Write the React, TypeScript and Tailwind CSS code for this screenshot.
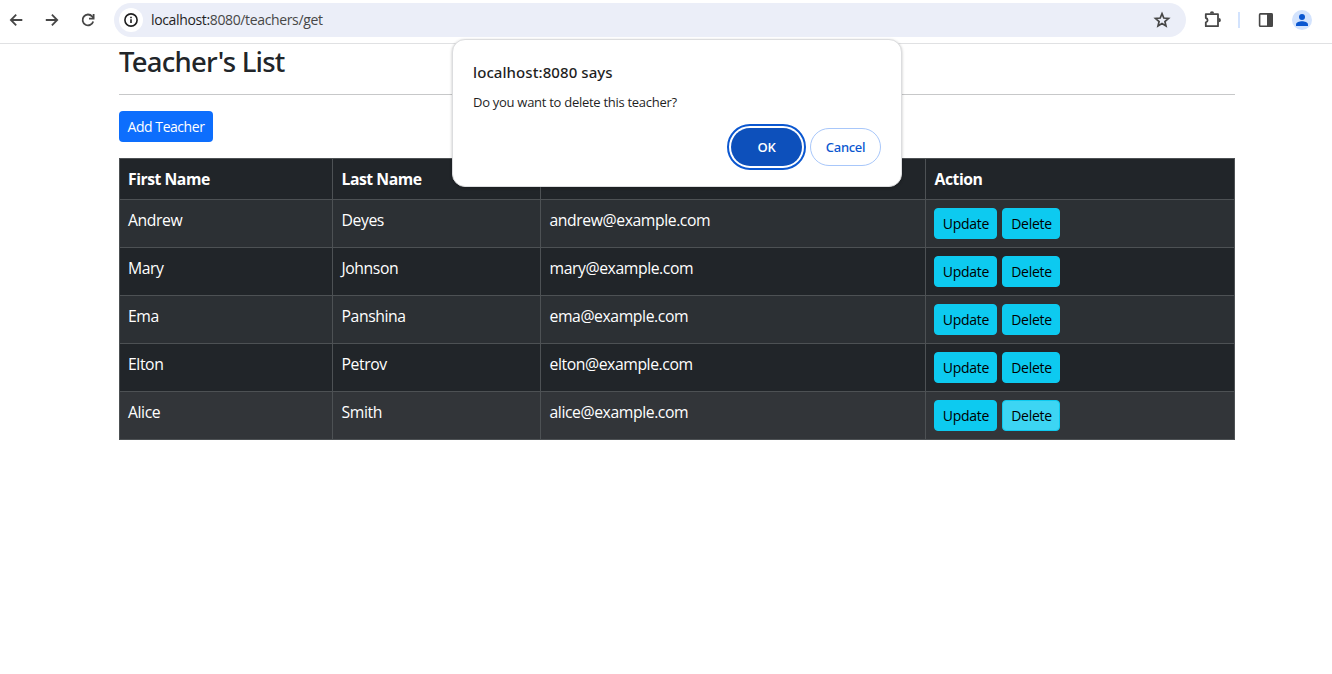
import React from "react";

type Teacher = { first: string; last: string; email: string; row: string };

const teachers: Teacher[] = [
  { first: "Andrew", last: "Deyes", email: "andrew@example.com", row: "bg-[#2c3034]" },
  { first: "Mary", last: "Johnson", email: "mary@example.com", row: "bg-[#212529]" },
  { first: "Ema", last: "Panshina", email: "ema@example.com", row: "bg-[#2c3034]" },
  { first: "Elton", last: "Petrov", email: "elton@example.com", row: "bg-[#212529]" },
  { first: "Alice", last: "Smith", email: "alice@example.com", row: "bg-[#323539]" },
];

const CELL = "border-r border-b border-[#4d5154] pt-2 text-left align-top";
const INFO_BTN =
  "flex h-[31px] items-center justify-center rounded-[4px] border border-[#0dcaf0] pt-px pl-px text-[14px] leading-5 tracking-[-0.28px] text-black";

function Toolbar() {
  return (
    <header className="flex h-11 items-start border-b border-[#e0e1e3] bg-white text-[#474747]">
      <div className="flex h-10 w-[114px] shrink-0 items-center">
        <svg className="ml-2 h-4 w-4" viewBox="0 0 16 16" fill="none" stroke="currentColor" strokeWidth="1.8">
          <path d="M14.3 8H3M8.2 2.7 2.9 8l5.3 5.3" />
        </svg>
        <svg className="ml-5 h-4 w-4" viewBox="0 0 16 16" fill="none" stroke="currentColor" strokeWidth="1.8">
          <path d="M1.8 8h11.3M7.9 2.7 13.2 8l-5.3 5.3" />
        </svg>
        <svg className="ml-5 h-4 w-4" viewBox="0 0 16 16" fill="none" stroke="currentColor" strokeWidth="1.8">
          <path d="M13.2 9.4A5.4 5.4 0 1 1 12.1 4.4L13.6 6" />
          <path d="M13.6 2v4.6H9" />
        </svg>
      </div>
      <div className="mt-[3px] flex h-[34px] w-[1072px] items-center rounded-full bg-[#ebeef8] pr-[15px] pl-[5px]">
        <span className="flex h-6 w-6 items-center justify-center rounded-full bg-white text-[#1f1f1f]">
          <svg className="h-4 w-4" viewBox="0 0 16 16" fill="none" stroke="currentColor" strokeWidth="1.6">
            <circle cx="8" cy="8" r="6.1" />
            <path d="M8 7.2v3.9M8 4.7v1.5" />
          </svg>
        </span>
        <span className="ml-2 text-[14px] leading-5 tracking-[-0.36px] text-[#474747]">
          <span className="text-[#1f1f1f]">localhost:</span>8080/teachers/get
        </span>
        <svg className="ml-auto h-[18px] w-[18px]" viewBox="0 0 18 18" fill="none" stroke="currentColor" strokeWidth="1.7">
          <path d="m9 2.700 1.800 4.300 4.700.400-3.600 3.100 1.100 4.500L9 12.600l-4 2.400 1.100-4.500-3.600-3.100 4.700-.400z" />
        </svg>
      </div>
      <div className="flex h-10 items-center">
        <svg className="ml-[18px] h-[18px] w-[18px]" viewBox="0 0 18 18">
          <path
            d="M1.800 3.100h12.200v12.100H1.800v-3.900c2.400-.500 2.400-3.800 0-4.300z"
            fill="none"
            stroke="currentColor"
            strokeWidth="1.8"
            strokeLinejoin="round"
          />
          <path d="M5.900 2.400a2.100 2.100 0 0 1 4.200 0zM14.800 7.100a2.100 2.100 0 0 1 0 4.200z" fill="currentColor" />
        </svg>
        <span className="ml-4 h-4 w-0.5 bg-[#d3e3fd]" />
        <svg className="ml-[18px] h-4 w-4" viewBox="0 0 16 16">
          <rect x="1.6" y="1.9" width="12.6" height="12.4" rx="0.8" fill="none" stroke="currentColor" strokeWidth="1.6" />
          <path d="M9 1.5h5.5v13.2H9z" fill="currentColor" />
        </svg>
        <svg className="ml-[18px] h-5 w-5" viewBox="0 0 20 20">
          <circle cx="10" cy="10" r="10" fill="#d3e3fd" />
          <circle cx="10" cy="7" r="3" fill="#0b57d0" />
          <path d="M4 16v-1.5c0-2 3.5-3.200 6-3.200s6 1.200 6 3.200V16z" fill="#0b57d0" />
        </svg>
      </div>
    </header>
  );
}

function ConfirmDialog() {
  return (
    <div
      role="dialog"
      className="absolute top-[39px] left-[452px] flex h-[148px] w-[450px] flex-col rounded-[13px] border border-[#dcdddf] bg-white px-5 shadow-[0_1px_3px_rgba(0,0,0,0.25)]"
    >
      <h2 className="mt-5 font-['Noto_Sans','Open_Sans',sans-serif] text-[15px] leading-6 font-medium tracking-[0.08px] text-[#1f1f1f]">
        <span className="inline-block">localhost:8080 says</span>
      </h2>
      <p className="mt-2 text-[13px] leading-5 tracking-[-0.28px] text-[#1f1f1f]">
        <span className="inline-block">Do you want to delete this teacher?</span>
      </p>
      <div className="mt-4 flex justify-end gap-2 text-[13px] leading-none">
        <button className="flex h-[38px] w-[71px] items-center justify-center rounded-full bg-[#0d50bb] font-semibold tracking-[-0.3px] text-white outline-2 outline-offset-2 outline-[#0b57d0]">
          OK
        </button>
        <button className="flex h-[38px] w-[71px] items-center justify-center rounded-full border border-[#a8c7fa] font-['Noto_Sans','Open_Sans',sans-serif] font-medium tracking-[-0.3px] text-[#0b57d0]">
          Cancel
        </button>
      </div>
    </div>
  );
}

export default function App() {
  return (
    <div className="relative h-[674px] w-[1332px] overflow-hidden bg-white font-['Open_Sans','Noto_Sans',sans-serif] text-[#212529]">
      <Toolbar />
      <main className="ml-[119px] w-[1116px]">
        <h1 className="h-[50px] pt-px font-['Noto_Sans','Open_Sans',sans-serif] text-[27.5px] leading-[34px] font-medium tracking-[-0.78px]">
          <span className="inline-block">Teacher's List</span>
        </h1>
        <hr className="border-t border-[#c7c8c9]" />
        <button className="mt-4 flex h-[31px] w-[94px] items-center justify-center rounded-[4px] bg-[#0d6efd] pt-px text-[14px] leading-5 tracking-[-0.45px] text-white">
          Add Teacher
        </button>
        <table className="mt-4 w-[1116px] table-fixed border-separate border-spacing-0 border-t border-l border-[#4d5154] text-[15.75px] leading-6 text-white">
          <colgroup>
            <col className="w-[213px]" />
            <col className="w-[208px]" />
            <col className="w-[385px]" />
            <col className="w-[309px]" />
          </colgroup>
          <thead>
            <tr className="h-[41px] bg-[#212529] tracking-[-0.47px]">
              <th className={`${CELL} pl-2 font-bold`}>First Name</th>
              <th className={`${CELL} pl-[8.5px] font-bold`}>Last Name</th>
              <th className={`${CELL} pl-[8.5px] font-bold`}>Email</th>
              <th className={`${CELL} pl-[8.5px] font-bold`}>Action</th>
            </tr>
          </thead>
          <tbody>
            {teachers.map((t, i) => (
              <tr key={t.email} className={`h-12 tracking-[-0.42px] ${t.row}`}>
                <td className={`${CELL} pl-2`}>{t.first}</td>
                <td className={`${CELL} pl-[8.5px]`}>{t.last}</td>
                <td className={`${CELL} pl-[8.5px]`}>{t.email}</td>
                <td className={`${CELL} pl-2`}>
                  <div className="flex gap-[5px]">
                    <button className={`${INFO_BTN} w-[63px] bg-[#0dcaf0]`}>Update</button>
                    <button
                      className={`${INFO_BTN} w-[58px] ${i === teachers.length - 1 ? "bg-[#3dd5f3]" : "bg-[#0dcaf0]"}`}
                    >
                      Delete
                    </button>
                  </div>
                </td>
              </tr>
            ))}
          </tbody>
        </table>
      </main>
      <ConfirmDialog />
    </div>
  );
}
